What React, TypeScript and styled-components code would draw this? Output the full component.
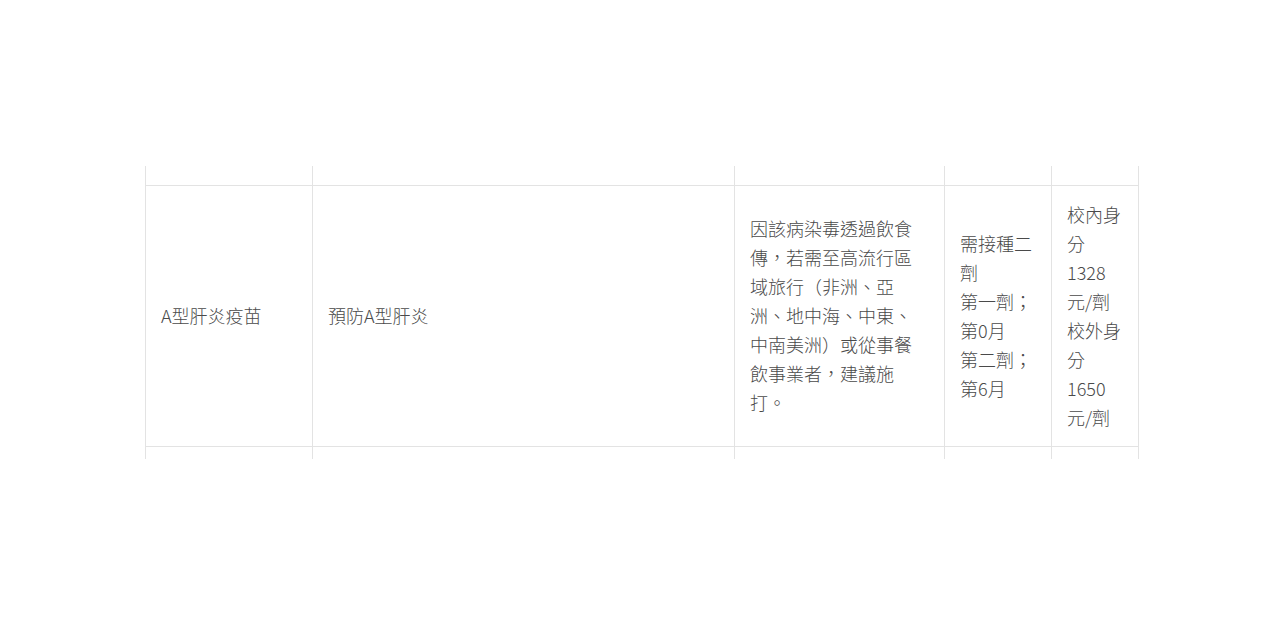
import { styled, createGlobalStyle } from 'styled-components';

const GlobalStyle = createGlobalStyle`
  html, body {
    margin: 0;
    padding: 0;
    background: #fff;
  }
  body {
    font-family: "Noto Sans CJK TC", "Noto Sans", sans-serif;
    color: #555;
  }
`;

const Page = styled.div`
  padding: 166px 0 0 145px;
`;

const Table = styled.table`
  width: 994px;
  border-collapse: collapse;
  table-layout: fixed;
  font-size: 18px;
  line-height: 29px;
`;

const Row = styled.tr<{ $height: number; $edge?: boolean }>`
  height: ${({ $height }) => $height}px;

  & > td {
    border-top: ${({ $edge }) => ($edge ? 'none' : '1px solid #e3e3e3')};
  }
`;

const Cell = styled.td`
  border-left: 1px solid #e3e3e3;
  border-right: 1px solid #e3e3e3;
  padding: 14px 15px;
  vertical-align: middle;
  color: #4a4a4a;
  font-weight: 300;
  line-break: strict;
`;

const EmptyCell = styled.td`
  border-left: 1px solid #e3e3e3;
  border-right: 1px solid #e3e3e3;
  padding: 0;
`;

const widths = [167, 422, 210, 107, 87];

export default function App() {
  return (
    <>
      <GlobalStyle />
      <Page>
        <Table>
          <colgroup>
            {widths.map((w, i) => (
              <col key={i} style={{ width: w }} />
            ))}
          </colgroup>
          <tbody>
            <Row $height={19} $edge>
              {widths.map((_, i) => (
                <EmptyCell key={i} />
              ))}
            </Row>
            <Row $height={260}>
              <Cell>A型肝炎疫苗</Cell>
              <Cell>預防A型肝炎</Cell>
              <Cell>
                因該病染毒透過飲食傳，若需至高流行區域旅行（非洲、亞洲、地中海、中東、中南美洲）或從事餐飲事業者，建議施打。
              </Cell>
              <Cell>
                需接種二劑
                <br />
                第一劑；第0月
                <br />
                第二劑；第6月
              </Cell>
              <Cell>
                校內身分1328元/劑
                <br />
                校外身分1650元/劑
              </Cell>
            </Row>
            <Row $height={13}>
              {widths.map((_, i) => (
                <EmptyCell key={i} />
              ))}
            </Row>
          </tbody>
        </Table>
      </Page>
    </>
  );
}
